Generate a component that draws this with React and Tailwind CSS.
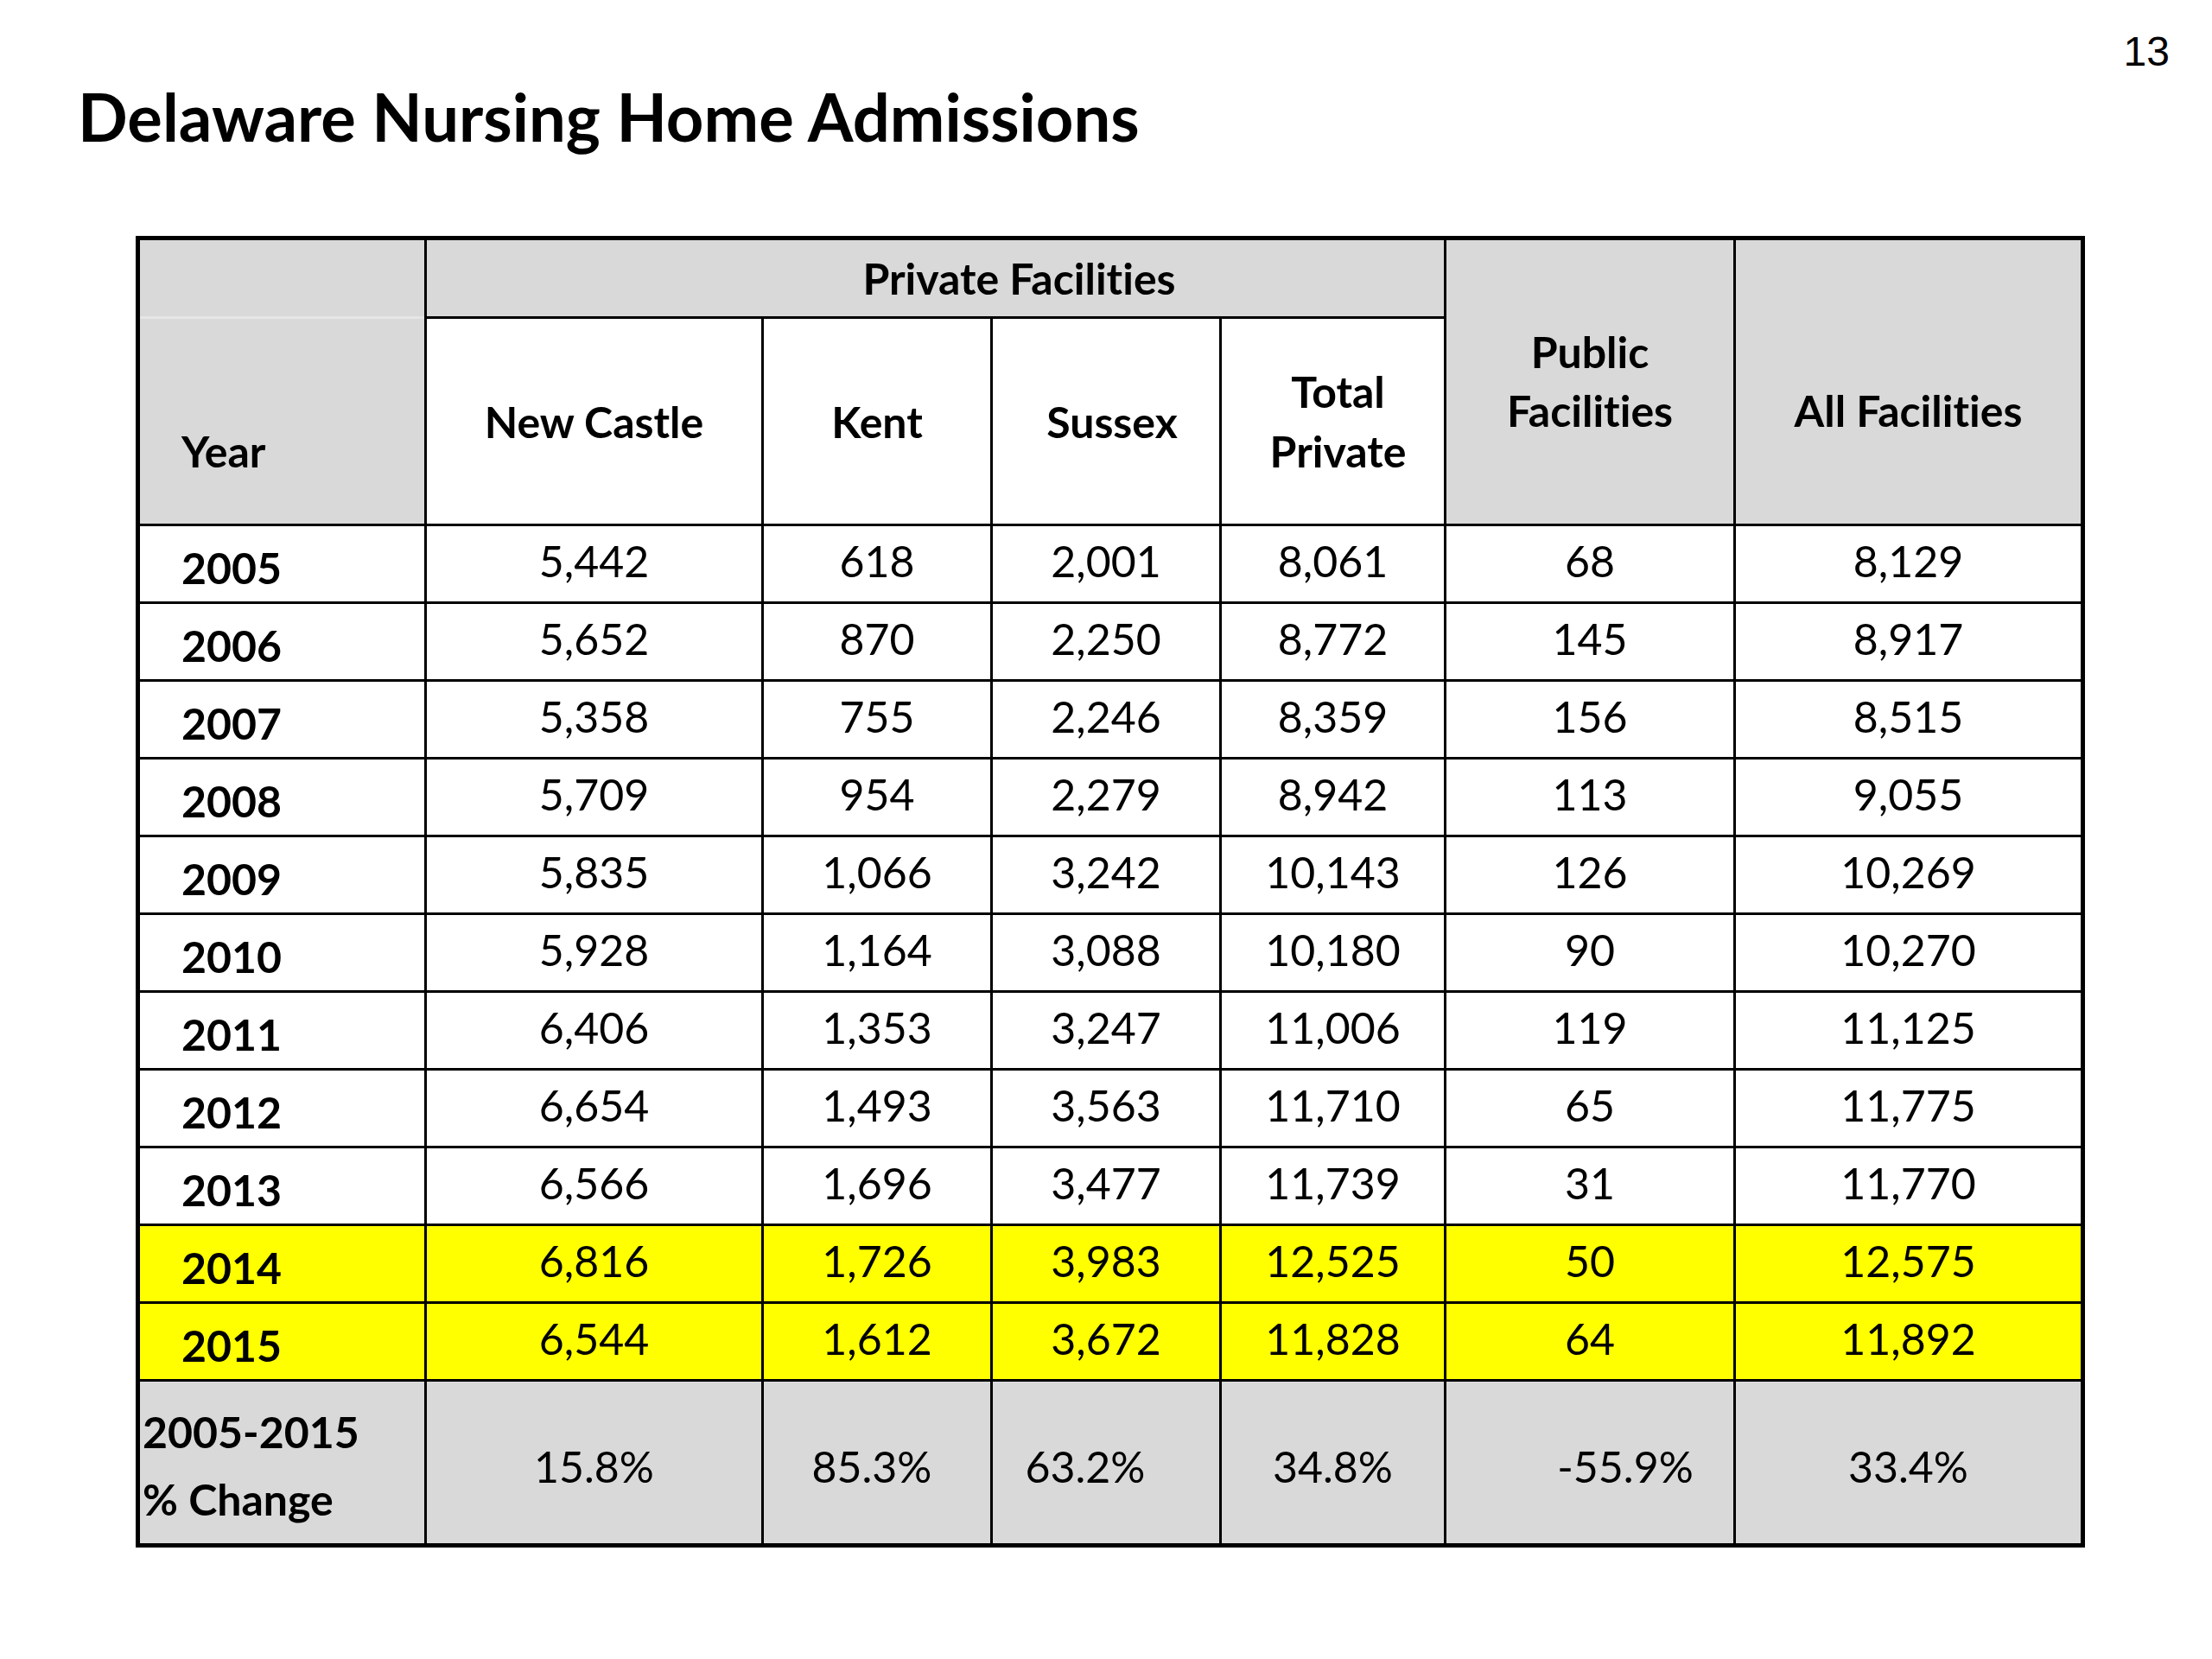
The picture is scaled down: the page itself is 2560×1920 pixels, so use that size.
const rows = [
  ['2005', '5,442', '618', '2,001', '8,061', '68', '8,129'],
  ['2006', '5,652', '870', '2,250', '8,772', '145', '8,917'],
  ['2007', '5,358', '755', '2,246', '8,359', '156', '8,515'],
  ['2008', '5,709', '954', '2,279', '8,942', '113', '9,055'],
  ['2009', '5,835', '1,066', '3,242', '10,143', '126', '10,269'],
  ['2010', '5,928', '1,164', '3,088', '10,180', '90', '10,270'],
  ['2011', '6,406', '1,353', '3,247', '11,006', '119', '11,125'],
  ['2012', '6,654', '1,493', '3,563', '11,710', '65', '11,775'],
  ['2013', '6,566', '1,696', '3,477', '11,739', '31', '11,770'],
  ['2014', '6,816', '1,726', '3,983', '12,525', '50', '12,575'],
  ['2015', '6,544', '1,612', '3,672', '11,828', '64', '11,892'],
];

const pct = [
  { v: '15.8%', cls: '' },
  { v: '85.3%', cls: 'pr-[12px]' },
  { v: '63.2%', cls: 'pr-[48px]' },
  { v: '34.8%', cls: '' },
  { v: '-55.9%', cls: 'pl-[82px]' },
  { v: '33.4%', cls: '' },
];

export default function App() {
  return (
    <div className="w-[2560px] h-[1920px] bg-white text-black font-['Lato',sans-serif] [font-variant-ligatures:none]">
      <div className="flex justify-end pr-[49px] pt-[36px] h-[84px] font-['Liberation_Sans',Arial,sans-serif] text-[48px] leading-[48px]">
        13
      </div>
      <h1 className="mt-[5px] pl-[90px] text-[76px] leading-[92px] font-bold">
        Delaware Nursing Home Admissions
      </h1>
      <div className="ml-[157px] mt-[92px] w-fit grid grid-cols-[329px_387px_262px_262px_257px_332px_399px] grid-rows-[88px_237px_repeat(11,87px)_187px] gap-[3px] p-[5px] bg-black text-[50px]">
        {/* Header */}
        <div className="col-start-1 row-start-1 row-span-2 flex flex-col bg-[#d9d9d9]">
          <div className="h-[88px]" />
          <div className="h-[3px] bg-[#e6e6e6]" />
          <div className="pt-[119px] pl-[48px] leading-[69px] font-bold">Year</div>
        </div>
        <div className="col-start-2 col-span-4 row-start-1 bg-[#d9d9d9] text-center pl-[194px] pt-[10px] leading-[69px] font-bold">
          Private Facilities
        </div>
        <div className="col-start-6 row-start-1 row-span-2 bg-[#d9d9d9] text-center pt-[95px] leading-[68px] font-bold">
          Public
          <br />
          Facilities
        </div>
        <div className="col-start-7 row-start-1 row-span-2 bg-[#d9d9d9] text-center pt-[163px] leading-[69px] font-bold">
          All Facilities
        </div>
        <div className="col-start-2 row-start-2 bg-white text-center pt-[85px] leading-[69px] font-bold">New Castle</div>
        <div className="col-start-3 row-start-2 bg-white text-center pt-[85px] leading-[69px] font-bold">Kent</div>
        <div className="col-start-4 row-start-2 bg-white text-center pt-[85px] pl-[14px] leading-[69px] font-bold">Sussex</div>
        <div className="col-start-5 row-start-2 bg-white text-center pt-[50px] pl-[12px] leading-[69px] font-bold">
          Total
          <br />
          Private
        </div>

        {/* Data rows */}
        {rows.map((r) => {
          const hl = r[0] === '2014' || r[0] === '2015';
          const bg = hl ? 'bg-[#ffff00]' : 'bg-white';
          return [
            <div key={r[0] + 'y'} className={`${bg} pl-[48px] pt-[18px] leading-[60px] font-bold`}>
              {r[0]}
            </div>,
            ...r.slice(1).map((v, i) => (
              <div key={r[0] + i} className={`${bg} text-center pt-[10px] leading-[60px]`}>
                {v}
              </div>
            )),
          ];
        })}

        {/* Percent change row */}
        <div className="bg-[#d9d9d9] pl-[3px] pt-[19px] leading-[78px] font-bold">
          2005-2015
          <br />
          % Change
        </div>
        {pct.map((p) => (
          <div key={p.v} className={`bg-[#d9d9d9] text-center pt-[68px] leading-[60px] ${p.cls}`}>
            {p.v}
          </div>
        ))}
      </div>
    </div>
  );
}
